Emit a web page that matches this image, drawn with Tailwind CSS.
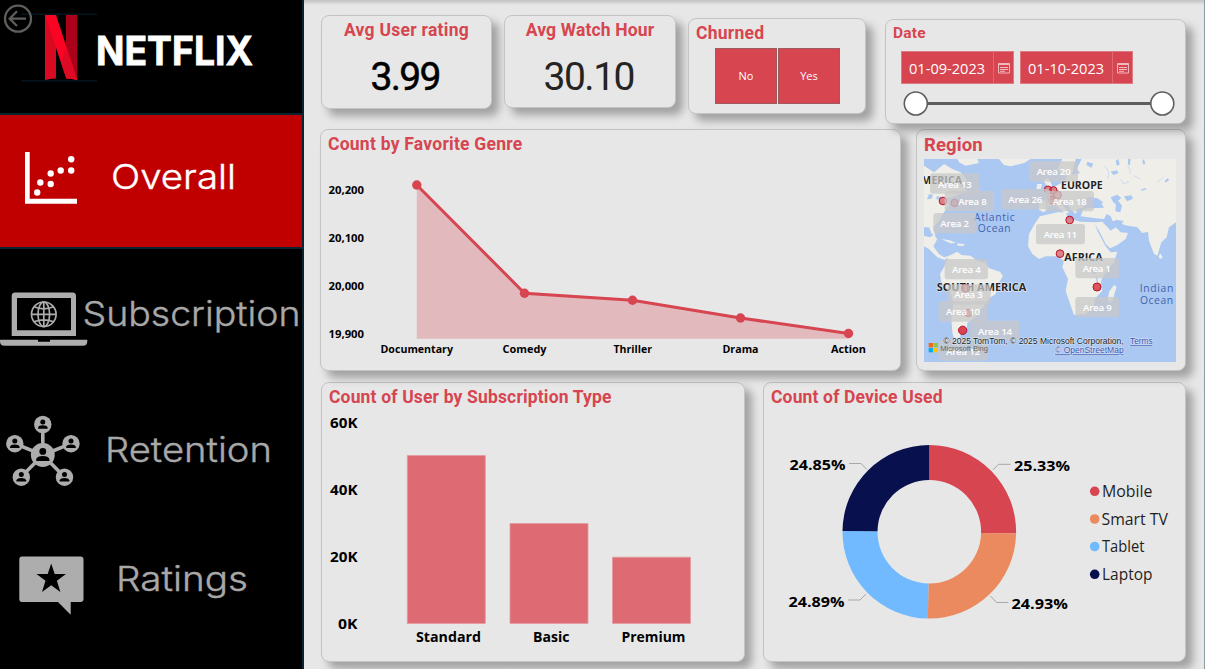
<!DOCTYPE html>
<html lang="en">
<head>
<meta charset="utf-8">
<title>Netflix Dashboard</title>
<script src="https://cdn.jsdelivr.net/npm/@tailwindcss/browser@4"></script>
</head>
<body class="w-[1205px] h-[669px] overflow-hidden flex bg-[#e7e7e7] font-['Open_Sans','Noto_Sans',sans-serif]">

<!-- Sidebar -->
<nav class="relative w-[304px] h-full shrink-0 bg-black border-r-2 border-[#0b2431] flex flex-col font-['Inter',sans-serif]">
  <header class="h-[115px] border-b-2 border-[#0b2431]">
    <svg class="block" width="302" height="113" viewBox="0 0 302 113">
      <path d="M21 14.300H97M21 80.700H97" stroke="#04141e" stroke-width="1.500"/>
      <path d="M45 15h11v63.500q-6 .2-11 1.400z" fill="#d80a22"/>
      <path d="M66 15h11.300v64.800q-5-1.200-11.300-1.400z" fill="#aa0019"/>
      <path d="M45 15h11l21.300 64.900q-5-1.200-11-1.500z" fill="#fb0424"/>
      <path d="M66 48l11.300 31.900q-5-1.200-11-1.500l-5-15z" fill="#dc0a22"/>
      <text x="96" y="65" font-size="39.500" font-weight="700" fill="#fff" stroke="#fff" stroke-width=".8" textLength="157" lengthAdjust="spacingAndGlyphs">NETFLIX</text>
      <circle cx="18" cy="18.700" r="13" fill="none" stroke="#605e5c" stroke-width="2.300"/>
      <path d="M26 18.700H10M17 11.300L9.700 18.700L17 26" fill="none" stroke="#605e5c" stroke-width="2.300"/>
    </svg>
  </header>
  <a class="h-[134px] bg-[#c00000] border-b-2 border-[#0b2431]">
    <svg class="block" width="302" height="132" viewBox="0 115 302 132">
      <path d="M25 152h4.700v46.700H77v5H25z" fill="#fff"/>
      <g fill="#fff"><circle cx="37.200" cy="192.500" r="3.200"/><circle cx="40.300" cy="182.500" r="3.200"/><circle cx="50.700" cy="184" r="3.200"/><circle cx="50.700" cy="173.500" r="3.200"/><circle cx="60.700" cy="170.500" r="3.200"/><circle cx="71.200" cy="170.500" r="3.200"/><circle cx="71.200" cy="159.300" r="3.200"/></g>
      <text x="111" y="189" font-size="34" font-weight="300" fill="#fff" stroke="#fff" stroke-width=".4" textLength="125" lengthAdjust="spacingAndGlyphs">Overall</text>
    </svg>
  </a>
  <a class="h-[131px]">
    <svg class="block" width="302" height="131" viewBox="0 249 302 131">
      <path fill-rule="evenodd" d="M15 292.500h57.500q3.500 0 3.500 3.500v40H11.700v-40q0-3.500 3.300-3.500zM17 298v32.300h54V298z" fill="#adadad"/>
      <path d="M0 339.700h38v2h12v-2h37.300v1.500q0 4.500-4.500 4.500H4.500Q0 345.700 0 341.200z" fill="#adadad"/>
      <g fill="none" stroke="#adadad" stroke-width="1.700"><circle cx="43.800" cy="314.300" r="12.300"/><ellipse cx="43.800" cy="314.300" rx="5.800" ry="12.300"/><path d="M43.800 302v24.600M31.500 314.300h24.600M34 306.800q9.800 4 19.600 0M34 321.800q9.800-4 19.600 0"/></g>
      <text x="82.500" y="326" font-size="34" font-weight="300" fill="#a8a8a8" stroke="#a8a8a8" stroke-width=".4" textLength="218" lengthAdjust="spacingAndGlyphs">Subscription</text>
    </svg>
  </a>
  <a class="h-[130px]">
    <svg class="block" width="302" height="130" viewBox="0 380 302 130">
      <path d="M42.800 455V425M42.800 455L15 443.700M42.800 455L71 443.700M42.800 455L21 477M42.800 455L64.500 477" stroke="#adadad" stroke-width="3.600"/>
      <defs><g id="person"><circle r="8.700" fill="#adadad"/><circle cy="-2.600" r="2.500" fill="#000"/><path d="M-4.800 4.300V3Q-4 .7 0 .7T4.800 3v1.300z" fill="#000"/></g></defs>
      <use href="#person" x="42.800" y="424.500"/><use href="#person" x="14.800" y="443.700"/><use href="#person" x="71" y="443.700"/><use href="#person" x="21.300" y="477.200"/><use href="#person" x="64.500" y="477.200"/>
      <use href="#person" transform="translate(42.800 455) scale(1.370)"/>
      <text x="105" y="462" font-size="34" font-weight="300" fill="#a8a8a8" stroke="#a8a8a8" stroke-width=".4" textLength="167" lengthAdjust="spacingAndGlyphs">Retention</text>
    </svg>
  </a>
  <a class="h-[130px]">
    <svg class="block" width="302" height="130" viewBox="0 510 302 130">
      <path d="M22 556.500h58.500q3 0 3 3v39.500q0 3-3 3H70.700v12.700L58 602H22q-2.700 0-2.700-3v-39.500q0-3 2.700-3z" fill="#adadad"/>
      <path d="M51.200 563.500l3.500 10.600h11.200l-9 6.600 3.500 11.300-9.200-6.800-9.200 6.800 3.500-11.300-9-6.600h11.200z" fill="#000"/>
      <text x="116" y="590.500" font-size="34" font-weight="300" fill="#a8a8a8" stroke="#a8a8a8" stroke-width=".4" textLength="132" lengthAdjust="spacingAndGlyphs">Ratings</text>
    </svg>
  </a>
</nav>

<!-- Dashboard -->
<main class="flex-1 h-full border-r border-[#8b9da3] bg-linear-to-b from-[#c2c2c2] to-[#e7e7e7] to-[5px] pt-[15px] pl-[16px] flex flex-col">
  <div class="h-[114px] shrink-0 flex items-start">
    <section class="ml-px w-[171px] h-[94px] rounded-lg border border-[#c4c4c4] bg-[#e7e7e7] shadow-[7px_7px_9px_rgba(0,0,0,0.3)] flex flex-col items-center">
      <h2 class="mt-[2px] h-[25px] leading-6 text-[17.500px] tracking-[0.270px] font-bold text-[#d64550] font-['Roboto',sans-serif] whitespace-nowrap">Avg User rating</h2>
      <svg width="169" height="60" viewBox="322 43 169 60" class="font-['Roboto',sans-serif]"><text x="370.500" y="90" font-size="39" fill="#000" stroke="#000" stroke-width=".5" textLength="71" lengthAdjust="spacing">3.99</text></svg>
    </section>
    <section class="ml-3 w-[172px] h-[93px] rounded-lg border border-[#c4c4c4] bg-[#e7e7e7] shadow-[7px_7px_9px_rgba(0,0,0,0.3)] flex flex-col items-center">
      <h2 class="mt-[2px] h-[25px] leading-6 text-[17.500px] tracking-[0.150px] font-bold text-[#d64550] font-['Roboto',sans-serif] whitespace-nowrap">Avg Watch Hour</h2>
      <svg width="170" height="60" viewBox="505 43 170 60" class="font-['Roboto',sans-serif]"><text x="543.500" y="90" font-size="39" fill="#252423" textLength="92" lengthAdjust="spacing">30.10</text></svg>
    </section>
    <section class="ml-[12px] mt-[3px] w-[178px] h-[96px] rounded-lg border border-[#c4c4c4] bg-[#e7e7e7] shadow-[7px_7px_9px_rgba(0,0,0,0.3)] flex flex-col">
      <h2 class="ml-[7px] mt-[2px] h-6 leading-6 text-[17.500px] tracking-[0.250px] font-bold text-[#d64550] font-['Roboto',sans-serif]">Churned</h2>
      <div class="flex gap-px ml-[26px] mt-[3px] text-[11px] text-white">
        <button class="w-[62px] h-[56px] bg-[#d64550] border border-[#9c5b5f]">No</button>
        <button class="w-[62px] h-[56px] bg-[#d64550] border border-[#9c5b5f]">Yes</button>
      </div>
    </section>
    <section class="relative z-20 ml-[19px] mt-1 w-[301px] h-[105px] rounded-lg border border-[#c4c4c4] bg-[#e7e7e7] shadow-[7px_7px_9px_rgba(0,0,0,0.3)] flex flex-col">
      <h2 class="ml-[7px] mt-[2px] h-[22px] leading-[22px] text-[15.500px] tracking-[0.200px] font-bold text-[#d64550] font-['Roboto',sans-serif]">Date</h2>
      <div class="flex gap-[6px] ml-[15px] mt-[7px] text-[14.600px] text-white">
        <div class="w-[113px] h-[33px] bg-[#d64550] border border-[#dd7a82] flex items-center">
          <span class="w-[92px] h-full leading-[32px] pl-[7px] border-r border-[#dd6a73] whitespace-nowrap">01-09-2023</span>
          <svg class="ml-1" width="12" height="12" viewBox="0 0 12 12" fill="none" stroke="#f0b9be"><path d="M.5 1.500h11v9.500H.5zM.5 2.500h11M2 5.500h8M2 7.500h8M2 9.300h5" /></svg>
        </div>
        <div class="w-[113px] h-[33px] bg-[#d64550] border border-[#dd7a82] flex items-center">
          <span class="w-[92px] h-full leading-[32px] pl-[7px] border-r border-[#dd6a73] whitespace-nowrap">01-10-2023</span>
          <svg class="ml-1" width="12" height="12" viewBox="0 0 12 12" fill="none" stroke="#f0b9be"><path d="M.5 1.500h11v9.500H.5zM.5 2.500h11M2 5.500h8M2 7.500h8M2 9.300h5" /></svg>
        </div>
      </div>
      <svg class="mt-[7px]" width="299" height="26" viewBox="886 91 299 26"><path d="M916 103.500h246" stroke="#605e5c" stroke-width="3"/><g fill="#fff" stroke="#605e5c" stroke-width="1.600"><circle cx="915.800" cy="103.500" r="11.500"/><circle cx="1162.300" cy="103.500" r="11.500"/></g></svg>
    </section>
  </div>

  <div class="relative z-10 h-[253px] shrink-0 flex items-start">
    <section class="w-[581px] h-[242px] rounded-lg border border-[#c4c4c4] bg-[#e7e7e7] shadow-[7px_7px_9px_rgba(0,0,0,0.3)]">
      <h2 class="ml-[7px] mt-[2px] h-6 leading-6 text-[17.500px] tracking-[0.240px] font-bold text-[#d64550] font-['Roboto',sans-serif] whitespace-nowrap">Count by Favorite Genre</h2>
      <svg class="block" width="579" height="210" viewBox="321 156 579 210">
        <path d="M416.800 185L524.500 293.200 632.500 300.300 740.500 318 848.500 333.500V338.700H416.800z" fill="#d64550" fill-opacity=".28"/>
        <path d="M416.800 185L524.500 293.200 632.500 300.300 740.500 318 848.500 333.500" fill="none" stroke="#d64550" stroke-width="3"/>
        <g fill="#d64550"><circle cx="416.800" cy="185" r="4.700"/><circle cx="524.500" cy="293.200" r="4.700"/><circle cx="632.500" cy="300.300" r="4.700"/><circle cx="740.500" cy="318" r="4.700"/><circle cx="848.500" cy="333.500" r="4.700"/></g>
        <g font-size="11" font-weight="700" fill="#000">
          <g lengthAdjust="spacingAndGlyphs"><text x="328.500" y="194" textLength="35.500" lengthAdjust="spacingAndGlyphs">20,200</text><text x="328.500" y="242" textLength="35.500" lengthAdjust="spacingAndGlyphs">20,100</text><text x="328.500" y="290" textLength="35.500" lengthAdjust="spacingAndGlyphs">20,000</text><text x="328.500" y="338" textLength="35.500" lengthAdjust="spacingAndGlyphs">19,900</text></g>
          <text x="380.500" y="353" textLength="72.500" lengthAdjust="spacingAndGlyphs">Documentary</text><text x="502.500" y="353" textLength="44" lengthAdjust="spacingAndGlyphs">Comedy</text><text x="613.500" y="353" textLength="38.500" lengthAdjust="spacingAndGlyphs">Thriller</text><text x="722.500" y="353" textLength="36" lengthAdjust="spacingAndGlyphs">Drama</text><text x="831" y="353" textLength="35" lengthAdjust="spacingAndGlyphs">Action</text>
        </g>
      </svg>
    </section>
    <section class="ml-[15px] w-[270px] h-[242px] rounded-lg border border-[#c4c4c4] bg-[#e7e7e7] shadow-[7px_7px_9px_rgba(0,0,0,0.3)]">
      <h2 class="ml-[7px] mt-[3px] h-[26px] leading-6 text-[18.500px] tracking-[0.100px] font-bold text-[#d64550] font-['Roboto',sans-serif]">Region</h2>
      <svg class="block ml-[7px]" width="252" height="203" viewBox="0 0 756 609">
        <rect width="756" height="609" fill="#abc8f2"/>
        <g fill="#efeee9">
          <path d="M0 20L30 40 60 15 85 30 110 40 130 65 105 78 130 95 95 110 70 118 75 140 60 160 45 185 28 205 35 235 22 222 15 205 0 205z"/>
          <path d="M0 230L18 235 28 228 40 240 28 262 45 285 60 295 75 290 62 303 40 295 15 270 0 262z"/>
          <path d="M52 240l25 4 20 8-18 1zM100 253l22 3-3 5-18-1z"/>
          <path d="M100 0L160 0 165 12 125 20 105 10z"/>
          <path d="M72 292L100 278 112 288 140 290 160 305 185 312 195 328 228 338 237 352 222 375 215 405 195 418 180 440 165 458 150 478 130 492 128 510 110 525 105 560 95 560 85 520 82 480 88 430 78 400 52 370 48 345 60 325z"/>
          <path d="M225 0H320L300 12 260 22 240 18z"/>
          <path d="M345 152V128L372 122 378 110 362 98 385 90 400 78 420 68 430 52 415 45 400 30 415 0H756V190L735 205 728 235 712 250 700 290 690 285 675 245 672 218 655 222 640 205 600 198 590 190 565 185 560 172 548 165 540 180 515 178 470 172 478 150 500 148 540 146 530 128 510 118 490 125 478 145 460 150 455 165 440 150 420 125 410 130 425 150 435 160 425 165 395 138 375 140 370 152 358 160z"/>
          <path d="M358 65l14-8 8 12 6 18-22 6 6-12zM340 75l14 0-3 14-14 2z"/>
          <path d="M348 172L400 160 425 160 432 178 470 188 512 190 520 215 545 262 560 280 580 278 570 310 540 345 530 370 535 395 512 420 510 440 485 465 450 468 440 440 425 395 432 360 415 325 420 305 400 292 365 292 345 300 325 285 312 262 315 225 335 190z"/>
          <path d="M510 190L535 188 560 215 575 205 590 220 612 222 605 240 580 258 558 268 545 255 530 225z"/>
          <path d="M570 378l8 5-12 40-8 8-7-12 5-22zM708 283l8 10-6 8-6-6z"/>
        </g>
        <g fill="#abc8f2">
          <path d="M560 115l20-8 12 10-10 8 12 15-5 20-15-3 2-20-10-10zM455 0l18 0-15 30 10 12-25 6 5-15zM600 112l22-3 5 10-18 8zM480 122l14-8 26 4 18 12-12 7-28-6-14 8zM575 182l25 4-12 10-18-8z"/>
          <path d="M490 8l18 6-6 12-15-8zM560 38l18-4 6 8-16 6zM650 92l14-5 4 4-14 4zM722 65l10-8 3 6-10 8zM575 5l8-5 4 16-8 6zM612 0l8 0-3 20-5-4zM655 5l5-5 4 14-6 3zM502 332l12-4 2 14-10 4zM515 355l4-2 5 22-4-1zM15 105l12 2-4 12-14 2zM38 112l14 2-3 8-12-1z"/>
        </g>
        <g fill="none" stroke="#c6d8f0" stroke-width="2.500"><path d="M540 20q20 15 12 40M590 60l8 14 16-5M630 50l18 10M700 70l18-15M610 20q12 10 8 25M520 66l-12 12"/></g>
        <g font-weight="700" font-size="31" fill="#252525" stroke="#f6f6f6" stroke-width="3" paint-order="stroke">
          <text x="-8" y="74" textLength="122" lengthAdjust="spacingAndGlyphs">MERICA</text>
          <text x="411" y="90" textLength="125" lengthAdjust="spacingAndGlyphs">EUROPE</text>
          <text x="421" y="306" textLength="115" lengthAdjust="spacingAndGlyphs">AFRICA</text>
          <text x="38" y="397" textLength="269" lengthAdjust="spacingAndGlyphs">SOUTH AMERICA</text>
        </g>
        <g font-size="31" font-weight="500" fill="#4163ad"><text x="150" y="185" textLength="122">Atlantic</text><text x="161" y="218" textLength="99">Ocean</text><text x="647" y="400" textLength="101">Indian</text><text x="648" y="434" textLength="99">Ocean</text></g>
        <g fill="#d64550" fill-opacity=".65" stroke="#b5142a" stroke-width="3">
          <circle cx="57" cy="126" r="11.500"/><circle cx="92" cy="132" r="11"/><circle cx="372" cy="92" r="11"/><circle cx="388" cy="94" r="11"/><circle cx="380" cy="112" r="11"/><circle cx="400" cy="108" r="12"/><circle cx="386" cy="124" r="12"/>
          <circle cx="437" cy="183" r="11.500"/><circle cx="408" cy="284" r="11.500"/><circle cx="519" cy="384" r="12" fill-opacity=".9"/><circle cx="125" cy="388" r="12"/><circle cx="133" cy="462" r="11"/><circle cx="116" cy="514" r="12.500" fill-opacity="1"/>
        </g>
        <g fill="#c8c8c8" fill-opacity=".75">
          <rect x="18" y="43" width="148" height="61" rx="9"/><rect x="62" y="96" width="148" height="61" rx="9"/><rect x="28" y="162" width="129" height="61" rx="9"/><rect x="315" y="7" width="147" height="61" rx="9"/><rect x="231" y="90" width="147" height="61" rx="9"/><rect x="363" y="96" width="147" height="61" rx="9"/><rect x="336" y="195" width="147" height="61" rx="9"/><rect x="62" y="300" width="130" height="61" rx="9"/><rect x="70" y="376" width="130" height="61" rx="9"/><rect x="454" y="297" width="131" height="61" rx="9"/><rect x="44" y="427" width="146" height="61" rx="9"/><rect x="454" y="414" width="131" height="61" rx="9"/><rect x="139" y="485" width="147" height="61" rx="9"/><rect x="44" y="544" width="146" height="61" rx="9"/>
        </g>
        <g font-size="29" font-weight="600" fill="#fff">
          <text x="42" y="87" textLength="101">Area 13</text><text x="103" y="139" textLength="85">Area 8</text><text x="49" y="205" textLength="86">Area 2</text><text x="338" y="49" textLength="102">Area 20</text><text x="253" y="133" textLength="102">Area 26</text><text x="386" y="139" textLength="102">Area 18</text><text x="359" y="238" textLength="100">Area 11</text><text x="84" y="343" textLength="86">Area 4</text><text x="91" y="418" textLength="85">Area 3</text><text x="476" y="340" textLength="84">Area 1</text><text x="66" y="469" textLength="102">Area 10</text><text x="477" y="457" textLength="86">Area 9</text><text x="162" y="529" textLength="102">Area 14</text><text x="66" y="587" textLength="102">Area 12</text>
        </g>
        <g font-family="Liberation Sans, sans-serif" font-size="25">
          <g stroke="#dce6f5" stroke-width="3" paint-order="stroke"><text x="58" y="556" fill="#222" textLength="541" lengthAdjust="spacingAndGlyphs">© 2025 TomTom, © 2025 Microsoft Corporation,</text>
          <text x="618" y="556" fill="#3553b4" textLength="68" lengthAdjust="spacingAndGlyphs" text-decoration="underline">Terms</text>
          <text x="393" y="583" fill="#3553b4" textLength="206" lengthAdjust="spacingAndGlyphs" text-decoration="underline">© OpenStreetMap</text></g>
          <text x="49" y="576" font-size="24" fill="#666" textLength="143" lengthAdjust="spacingAndGlyphs">Microsoft Bing</text>
        </g>
        <path d="M14 552h13v13H14z" fill="#f26522"/><path d="M29 552h13v13H29z" fill="#8dc63f"/><path d="M14 567h13v13H14z" fill="#00aeef"/><path d="M29 567h13v13H29z" fill="#ffc20e"/>
      </svg>
    </section>
  </div>

  <div class="h-[280px] shrink-0 flex items-start">
    <section class="ml-px w-[424px] h-[280px] rounded-lg border border-[#c4c4c4] bg-[#e7e7e7] shadow-[7px_7px_9px_rgba(0,0,0,0.3)]">
      <h2 class="ml-[7px] mt-[2px] h-6 leading-6 text-[17.500px] tracking-[0.160px] font-bold text-[#d64550] font-['Roboto',sans-serif] whitespace-nowrap">Count of User by Subscription Type</h2>
      <svg class="block" width="422" height="250" viewBox="322 409 422 250">
        <g fill="#de6a73" stroke="#e59aa0" stroke-width=".8"><path d="M407.300 455.500h78v168h-78z"/><path d="M510 523.500h78v100h-78z"/><path d="M612.500 557.200h78v66.300h-78z"/></g>
        <g font-size="15" font-weight="700" fill="#000">
          <text x="330" y="428" textLength="27.500" lengthAdjust="spacingAndGlyphs">60K</text><text x="330" y="495" textLength="27.500" lengthAdjust="spacingAndGlyphs">40K</text><text x="330" y="562" textLength="27.500" lengthAdjust="spacingAndGlyphs">20K</text><text x="338" y="629" textLength="19.500" lengthAdjust="spacingAndGlyphs">0K</text>
          <text x="416" y="642" textLength="65" lengthAdjust="spacingAndGlyphs">Standard</text><text x="533" y="642" textLength="36.500" lengthAdjust="spacingAndGlyphs">Basic</text><text x="621.500" y="642" textLength="64" lengthAdjust="spacingAndGlyphs">Premium</text>
        </g>
      </svg>
    </section>
    <section class="ml-[18px] w-[423px] h-[280px] rounded-lg border border-[#c4c4c4] bg-[#e7e7e7] shadow-[7px_7px_9px_rgba(0,0,0,0.3)]">
      <h2 class="ml-[7px] mt-[2px] h-6 leading-6 text-[17.500px] tracking-[0.150px] font-bold text-[#d64550] font-['Roboto',sans-serif] whitespace-nowrap">Count of Device Used</h2>
      <svg class="block" width="421" height="250" viewBox="764 409 421 250">
        <g transform="translate(929.300 531.800)">
          <path d="M0-86.800A86.800 86.800 0 0 1 86.800 1.800L51.800 1.100A51.800 51.800 0 0 0 0-51.800z" fill="#d64550"/>
          <path d="M86.800 1.800A86.800 86.800 0 0 1-1.400 86.800L-.85 51.800A51.800 51.800 0 0 0 51.800 1.100z" fill="#eb895f"/>
          <path d="M-1.400 86.800A86.800 86.800 0 0 1-86.800-.8L-51.800-.5A51.800 51.800 0 0 0-.85 51.800z" fill="#71baff"/>
          <path d="M-86.800-.8A86.800 86.800 0 0 1 0-86.800V-51.800A51.800 51.800 0 0 0-51.800-.5z" fill="#08104d"/>
        </g>
        <path d="M849 463.500h12l6 6M1010.500 464.300h-12l-5.500 5.500M848 600h12l6-6M1008.500 602.500h-12l-6-6.500" fill="none" stroke="#a8a8a8"/>
        <g font-size="15" font-weight="700" fill="#000"><text x="789.500" y="470" textLength="56" lengthAdjust="spacingAndGlyphs">24.85%</text><text x="1014" y="471" textLength="56" lengthAdjust="spacingAndGlyphs">25.33%</text><text x="788.500" y="607" textLength="56" lengthAdjust="spacingAndGlyphs">24.89%</text><text x="1011.500" y="609" textLength="56.500" lengthAdjust="spacingAndGlyphs">24.93%</text></g>
        <circle cx="1094.700" cy="491.300" r="4.800" fill="#d64550"/><circle cx="1094.700" cy="519" r="4.800" fill="#eb895f"/><circle cx="1094.700" cy="546.500" r="4.800" fill="#71baff"/><circle cx="1094.700" cy="574.300" r="4.800" fill="#08104d"/>
        <g font-size="15.500" fill="#1f1f1f"><text x="1102" y="497" textLength="50.500" lengthAdjust="spacingAndGlyphs">Mobile</text><text x="1101.500" y="525" textLength="66.500" lengthAdjust="spacingAndGlyphs">Smart TV</text><text x="1102" y="552" textLength="42.500" lengthAdjust="spacingAndGlyphs">Tablet</text><text x="1102" y="580" textLength="50.500" lengthAdjust="spacingAndGlyphs">Laptop</text></g>
      </svg>
    </section>
  </div>
</main>
</body>
</html>
